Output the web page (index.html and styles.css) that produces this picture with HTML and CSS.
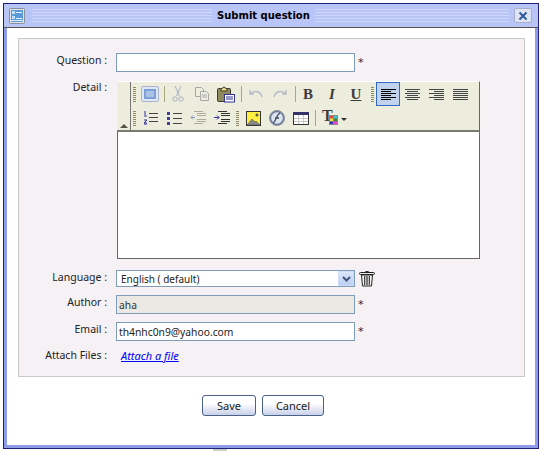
FILE: index.html
```html
<!DOCTYPE html>
<html lang="en">
<head>
<meta charset="utf-8">
<title>Submit question</title>
<link rel="stylesheet" href="styles.css">
</head>
<body>
<div class="window">
  <header class="titlebar">
    <svg class="win-icon" width="16" height="16" viewBox="0 0 16 16"><rect x=".5" y=".5" width="15" height="15" rx="1" fill="#dfe4ec" stroke="#8a8f98"/><rect x="2" y="2" width="12" height="12" fill="#5a9ad8"/><rect x="3" y="3" width="3" height="3" fill="#bfe0f8"/><rect x="7" y="4" width="6" height="1" fill="#e8f4ff"/><rect x="3" y="8" width="3" height="3" fill="#bfe0f8"/><rect x="7" y="10" width="6" height="1" fill="#e8f4ff"/><rect x="2" y="12" width="12" height="1" fill="#dfeaf6"/></svg>
    <div class="stripes stripes-left"></div>
    <h1 class="title">Submit question</h1>
    <div class="stripes"></div>
    <button class="close" type="button"><svg width="10" height="10" viewBox="0 0 10 10"><path d="M1.500 1.500l7 7M8.500 1.500l-7 7" stroke="#2f5a9a" stroke-width="2" fill="none"/></svg></button>
  </header>
  <main class="body">
    <section class="panel">
      <div class="row row-q">
        <label class="lbl">Question :</label>
        <input class="field" type="text">
        <span class="req">*</span>
      </div>
      <div class="row row-detail">
        <label class="lbl">Detail :</label>
        <div class="editor">
          <div class="toolbar">
            <div class="collapse"><span class="tri"></span></div>
            <div class="tools">
              <div class="tool-row">
                <span class="handle"></span>
                <span class="btn"><svg width="18" height="16" viewBox="0 0 18 16"><rect x=".5" y=".5" width="17" height="15" rx="1.500" fill="#dfe6f4" stroke="#a8b4cc"/><rect x="3" y="3" width="12" height="10" fill="#7f9fd8"/><path d="M5 6h8M5 8h8M5 10h8" stroke="#dbe6f8"/></svg></span>
                <span class="sep"></span>
                <span class="btn"><svg width="12" height="16" viewBox="0 0 12 16" fill="none" stroke="#a8afc0"><path d="M3 0l4.500 10M9 0l-4.500 10"/><circle cx="3" cy="13" r="2.200"/><circle cx="9" cy="13" r="2.200"/></svg></span>
                <span class="btn"><svg width="16" height="16" viewBox="0 0 16 16" fill="#eeeedd" stroke="#a8a8a8"><path d="M1.500 1.500h6l2 2v7h-8z"/><path d="M6.500 5.500h6l2 2v7h-8z"/><path d="M8 9h5M8 11h5" stroke-width="1"/></svg></span>
                <span class="btn"><svg width="18" height="17" viewBox="0 0 18 17"><rect x=".5" y="2.500" width="13" height="13" rx="1" fill="#8f8a5c" stroke="#3c3c30"/><path d="M4 3l3-2 3 2v2H4z" fill="#e8d98a" stroke="#3c3c30"/><rect x="7.500" y="8.500" width="10" height="7.500" fill="#fff" stroke="#33339a"/><path d="M9 11h7M9 13h7" stroke="#33339a"/></svg></span>
                <span class="sep sep-six"></span>
                <span class="btn"><svg width="14" height="10" viewBox="0 0 14 10" fill="none" stroke="#b8bcc8" stroke-width="1.500"><path d="M1 1v4h4M1.500 5C4 1.500 11 1 13 8"/></svg></span>
                <span class="btn"><svg width="14" height="10" viewBox="0 0 14 10" fill="none" stroke="#b8bcc8" stroke-width="1.500"><path d="M13 1v4H9M12.500 5C10 1.500 3 1 1 8"/></svg></span>
                <span class="sep sep-late"></span>
                <span class="btn glyph bold">B</span>
                <span class="btn glyph ital">I</span>
                <span class="btn glyph under">U</span>
                <span class="handle handle-mid"></span>
                <span class="btn active"><svg width="15" height="11" viewBox="0 0 15 11" stroke="#000"><path d="M0 .5h15M0 2.500h10M0 4.500h15M0 6.500h10M0 8.500h15M0 10.500h10"/></svg></span>
                <span class="btn"><svg width="15" height="11" viewBox="0 0 15 11" stroke="#444"><path d="M0 .5h15M2 2.500h11M0 4.500h15M2 6.500h11M0 8.500h15M2 10.500h11"/></svg></span>
                <span class="btn"><svg width="15" height="11" viewBox="0 0 15 11" stroke="#444"><path d="M0 .5h15M5 2.500h10M0 4.500h15M5 6.500h10M0 8.500h15M5 10.500h10"/></svg></span>
                <span class="btn"><svg width="15" height="11" viewBox="0 0 15 11" stroke="#444"><path d="M0 .5h15M0 2.500h15M0 4.500h15M0 6.500h15M0 8.500h15M0 10.500h15"/></svg></span>
              </div>
              <div class="tool-row">
                <span class="handle"></span>
                <span class="btn"><svg width="15" height="14" viewBox="0 0 15 14"><path d="M2 0v4M1 9h3L1 12h3M1 13h3" stroke="#33339a" fill="none"/><path d="M1 5h3" stroke="#33339a"/><path d="M6 2.500h9M6 6.500h9M6 10.500h9" stroke="#444"/></svg></span>
                <span class="btn"><svg width="15" height="13" viewBox="0 0 15 13"><rect y="0" width="3" height="3" fill="#3f3f9a"/><rect y="5" width="3" height="3" fill="#3f3f9a"/><rect y="10" width="3" height="3" fill="#3f3f9a"/><path d="M6 1.500h9M6 6.500h9M6 11.500h9" stroke="#444"/></svg></span>
                <span class="btn"><svg width="16" height="14" viewBox="0 0 16 14" fill="none"><path d="M5 6.500H1M3 4.500l-2 2 2 2" stroke="#8e9cc4"/><path d="M4 .5h9M7 2.500h9M7 4.500h9M7 8.500h9M7 10.500h9M4 12.500h9" stroke="#aeaea0"/></svg></span>
                <span class="btn"><svg width="16" height="14" viewBox="0 0 16 14" fill="none"><path d="M0 6.500h5M3 4.500l2 2-2 2" stroke="#33339a"/><path d="M4 .5h9M7 2.500h9M7 4.500h9M7 8.500h9M7 10.500h9M4 12.500h9" stroke="#333"/></svg></span>
                <span class="handle"></span>
                <span class="btn"><svg width="15" height="15" viewBox="0 0 15 15"><rect x=".5" y=".5" width="14" height="14" fill="#fff040" stroke="#333"/><circle cx="11" cy="4" r="1.500" fill="#555"/><path d="M1 14l5-6 3 3 1-1 4 4z" fill="#8a8a8a" stroke="#444" stroke-width=".5"/></svg></span>
                <span class="btn"><svg width="16" height="16" viewBox="0 0 16 16"><circle cx="8" cy="8" r="7.500" fill="#6d7f9e" stroke="#8a8f98"/><circle cx="8" cy="8" r="5.800" fill="#dde4f0"/><path d="M4 13c3-1 3-8 7-10M6 8h4" stroke="#444c66" stroke-width="1.300" fill="none"/></svg></span>
                <span class="btn"><svg width="16" height="13" viewBox="0 0 16 13"><rect x=".5" y=".5" width="15" height="12" fill="#fff" stroke="#333"/><rect width="16" height="3" fill="#33336a"/><path d="M5.500 3v9M10.500 3v9M1 6.500h14M1 9.500h14" stroke="#c8c8c8"/></svg></span>
                <span class="sep"></span>
                <span class="color">
                  <span class="color-t">T</span>
                  <svg class="swatch" width="9" height="10" viewBox="0 0 9 10"><rect width="9" height="10" fill="#8a8a8a"/><rect x="1" y="1" width="3" height="2.500" fill="#f04030"/><rect x="5" y="1" width="3" height="2.500" fill="#30d0d0"/><rect x="1" y="3.500" width="3" height="3" fill="#f0e040"/><rect x="5" y="3.500" width="3" height="3" fill="#408040"/><rect x="1" y="6.500" width="3" height="2.500" fill="#3030c0"/><rect x="5" y="6.500" width="3" height="2.500" fill="#f040d0"/></svg>
                  <span class="caret"></span>
                </span>
              </div>
            </div>
          </div>
          <div class="textarea"></div>
        </div>
      </div>
      <div class="row row-lang">
        <label class="lbl">Language :</label>
        <div class="select">
          <span class="select-text">English ( default)</span>
          <span class="select-btn"><svg width="9" height="6" viewBox="0 0 9 6"><path d="M1 1l3.500 3.500L8 1" fill="none" stroke="#3f5580" stroke-width="2"/></svg></span>
        </div>
        <svg class="trash" width="16" height="17" viewBox="0 0 16 17"><path d="M5.500 3C5.500 1 10.500 1 10.500 3" fill="#ddd" stroke="#222"/><rect x=".5" y="2.500" width="15" height="2" rx="1" fill="#e8e8e8" stroke="#222"/><path d="M2.500 5l1 11h9l1-11z" fill="#f4f4f4" stroke="#222"/><path d="M5.500 6v9M7.200 6v9M8.800 6v9M10.500 6v9" stroke="#444"/></svg>
      </div>
      <div class="row row-author">
        <label class="lbl">Author :</label>
        <input class="field field-off" type="text" value="aha" disabled>
        <span class="req">*</span>
      </div>
      <div class="row row-email">
        <label class="lbl">Email :</label>
        <input class="field" type="text" value="th4nhc0n9@yahoo.com">
        <span class="req">*</span>
      </div>
      <div class="row row-attach">
        <label class="lbl">Attach Files :</label>
        <a class="attach" href="#">Attach a file</a>
      </div>
    </section>
    <div class="actions">
      <button class="action action-save" type="button">Save</button>
      <button class="action action-cancel" type="button">Cancel</button>
    </div>
  </main>
</div>
<div class="stub"></div>
</body>
</html>
```
FILE: styles.css
```css
* { box-sizing: border-box; }
html, body { margin: 0; height: 100%; background: #fff; overflow: hidden; }
body { padding: 3px 3px 0; font: 11px "Noto Sans", sans-serif; color: #222; }
.window { width: 536px; height: 446px; border: 1px solid #1f1f7a; background: #8f9de8; padding: 0 3px 3px; display: flex; flex-direction: column; }
.titlebar { height: 24px; margin: 0 -3px; padding: 0 6px 0 5px; background: #b9c5f6; border-bottom: 1px solid #555; display: flex; align-items: center; flex: none; }
.win-icon { flex: none; margin-right: 7px; }
.stripes { flex: 1; height: 13px; background: repeating-linear-gradient(#cfd7fa 0 1px, #b9c5f6 1px 3px); }
.stripes-left { flex: none; width: 180px; }
.title { margin: 0; padding: 0 5px; font: bold 10px "DejaVu Sans", sans-serif; color: #000; white-space: nowrap; }
.close { flex: none; width: 18px; height: 15px; margin-left: 5px; padding: 0; border: 1px solid #a8b0c8; border-radius: 2px; background: #dfe4f4; display: flex; align-items: center; justify-content: center; }
.body { flex: 1; background: #fff; padding: 10px 10px 0 11px; }
.panel { width: 507px; height: 339px; background: #f5f1f5; border: 1px solid #c8c8c8; padding-top: 14px; }
.row { display: flex; align-items: flex-start; }
.lbl { width: 88px; text-align: right; flex: none; margin-right: 9px; font: 10.5px/14px "Noto Sans", sans-serif; color: #222; }
.field { width: 239px; height: 19px; border: 1px solid #7f9db9; background: #fff; padding: 0 1px 0 2px; font: 10.3px "Noto Sans", sans-serif; color: #222; outline: none; flex: none; }
.field-off { background: #ece9e4; color: #333; }
.req { margin-left: 3px; color: #223; font: 11px/19px "DejaVu Sans", sans-serif; }
.row-detail { margin-top: 9px; height: 178px; }
.row-detail .lbl { line-height: 12px; }
.editor { width: 364px; flex: none; }
.toolbar { height: 51px; background: #ededdd; border-right: 1px solid #666; border-bottom: 2px solid #7a7a70; margin-left: 1px; display: flex; border-top: 1px solid #fff; }
.collapse { width: 14px; border-right: 1px solid #777; display: flex; align-items: flex-end; justify-content: center; padding-bottom: 2px; flex: none; }
.tri { border: 4px solid transparent; border-top: 0; border-bottom-color: #554; width: 0; height: 0; }
.tools { flex: 1; }
.tool-row { display: flex; height: 24px; align-items: center; }
.handle { width: 7px; height: 15px; flex: none; background: linear-gradient(90deg, transparent 2px, #8f8a60 2px 5px, transparent 5px); -webkit-mask: repeating-linear-gradient(#000 0 1px, transparent 1px 2px); mask: repeating-linear-gradient(#000 0 1px, transparent 1px 2px); }
.handle-mid { width: 8px; background: linear-gradient(90deg, transparent 3px, #8f8a60 3px 6px, transparent 6px); }
.btn { width: 24px; height: 24px; flex: none; display: flex; align-items: center; justify-content: center; border: 1px solid transparent; }
.sep { width: 4px; height: 16px; flex: none; background: linear-gradient(90deg, transparent 2px, #a8a878 2px 3px, transparent 3px); }
.sep-six { width: 6px; background: linear-gradient(90deg, transparent 3px, #a8a878 3px 4px, transparent 4px); }
.sep-late { background: linear-gradient(90deg, transparent 3px, #a8a878 3px 4px, transparent 4px); }
.active { border: 1px solid #316ac5; background: #c1d2ee; }
.glyph { font: bold 15px "Liberation Serif", serif; color: #3c3c3c; }
.ital { font-style: italic; }
.under { text-decoration: underline; }
.color { width: 32px; height: 24px; display: flex; position: relative; flex: none; }
.color-t { font: bold 16px "Liberation Serif", serif; color: #3c3c3c; margin-left: 5px; line-height: 19px; }
.swatch { position: absolute; left: 12px; top: 9px; }
.caret { position: absolute; left: 24px; top: 12px; border: 3px solid transparent; border-top: 3px solid #333; border-bottom: 0; }
.textarea { height: 127px; background: #fff; border: 1px solid #666; border-top: 0; margin-left: 1px; }
.row-lang { margin-top: 11px; height: 17px; }
.select { width: 239px; height: 17px; flex: none; background: #fff; border: 1px solid #7f9db9; display: flex; justify-content: space-between; align-items: center; padding-left: 4px; font: 10px "Noto Sans", sans-serif; color: #222; }
.select-btn { width: 16px; height: 15px; background: linear-gradient(#dbe6fb, #bccff2); border: 1px solid #cfdcf8; display: flex; align-items: center; justify-content: center; }
.trash { margin-left: 4px; flex: none; }
.row-author { margin-top: 8px; }
.row-email { margin-top: 8px; }
.row-attach { margin-top: 7px; }
.row-attach .lbl { line-height: 15px; }
.attach { margin-left: 5px; font: italic 11px/15px "Noto Sans", sans-serif; color: #00f; text-decoration: underline; }
.actions { display: flex; gap: 6px; justify-content: flex-start; margin: 18px 0 0 184px; }
.action { height: 21px; padding: 0; border: 1px solid #4a6288; border-radius: 3px; background: linear-gradient(#fff 40%, #c8d0ea); font: 11px "Noto Sans", sans-serif; color: #222; }
.action-save { width: 54px; }
.action-cancel { width: 62px; }
.stub { width: 14px; height: 2px; margin-left: 210px; background: #ccc; }
```
